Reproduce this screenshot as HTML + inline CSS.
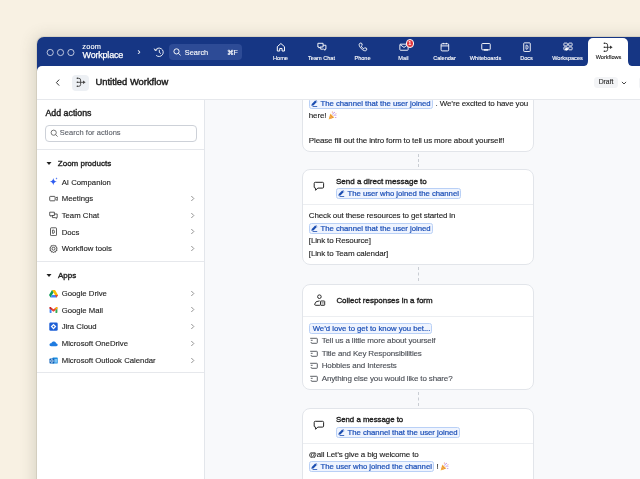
<!DOCTYPE html>
<html><head><meta charset="utf-8">
<style>
*{box-sizing:border-box;margin:0;padding:0}
html,body{width:640px;height:479px;overflow:hidden}
#root{position:absolute;left:0;top:0;width:640px;height:479px;will-change:transform}
.t{-webkit-text-stroke:.12px currentColor}
body{background:#F8F1E3;font-family:"Liberation Sans",sans-serif;position:relative;color:#222}
.abs{position:absolute}
#win{position:absolute;left:37px;top:36.5px;width:700px;height:500px;background:#163684;border-top-left-radius:7px;box-shadow:0 0 0 1px rgba(70,70,55,.1),-2px 0 16px rgba(70,75,60,.2)}
#panel{position:absolute;left:37px;top:66px;width:700px;height:500px;background:#fff;border-top-left-radius:5px}
.t{position:absolute;white-space:nowrap;line-height:1}
.navi{position:absolute;top:40px;width:41px;height:26px;text-align:center;color:#fff}
.navi .lb{position:absolute;left:-10px;right:-10px;top:14.5px;font-size:5.6px;text-align:center;-webkit-text-stroke:.12px #fff}
.navi svg{position:absolute;left:15.5px;top:1.8px}
#side{position:absolute;left:37px;top:100px;width:168px;height:400px;background:#fff;border-right:1px solid #E3E6EB}
#canvas{position:absolute;left:205px;top:100px;width:440px;height:400px;background:#F8F9FB;overflow:hidden}
.hr{position:absolute;height:1px;background:#E6E8EC}
.item{position:absolute;left:61.7px;font-size:7.75px;color:#1E1E1E}
.chev{position:absolute;left:190px}
.card{position:absolute;left:302px;width:232px;background:#fff;border:1px solid #E2E5EA;border-radius:8px}
.chip{position:absolute;height:11.2px;background:#EFF4FE;border:1px solid #B9D0F6;border-radius:2.5px;color:#1F52B8;line-height:9px;padding-left:10.5px;padding-right:1px;white-space:nowrap;font-size:7.75px;-webkit-text-stroke:.22px #1F52B8;letter-spacing:-.02px}
.chip svg{position:absolute;left:.8px;top:1.3px}
.dash{position:absolute;left:417.5px;width:1px;border-left:1px dashed #C9CDD3}
</style></head><body>
<div id="root">
<div id="win"></div>
<svg class="abs" style="left:44px;top:46px" width="34" height="12" viewBox="0 0 34 12">
<circle cx="6.2" cy="6.5" r="3.1" fill="none" stroke="#D9DEEC" stroke-width=".85"/>
<circle cx="16.5" cy="6.5" r="3.1" fill="none" stroke="#D9DEEC" stroke-width=".85"/>
<circle cx="26.9" cy="6.5" r="3.1" fill="none" stroke="#D9DEEC" stroke-width=".85"/>
</svg>
<div class="t" style="left:82.3px;top:42.6px;font-size:7.4px;color:#fff;letter-spacing:.15px;-webkit-text-stroke:.12px #fff">zoom</div>
<div class="t" style="left:82.5px;top:51.2px;font-size:9px;color:#fff;letter-spacing:-.2px;-webkit-text-stroke:.25px #fff">Workplace</div>
<div class="t" style="left:137.5px;top:48px;font-size:9px;color:#fff">›</div>
<svg class="abs" style="left:153px;top:46px" width="12" height="12" viewBox="0 0 12 12"><path d="M2.3 4.3A4.2 4.2 0 1 1 3.2 9.4" fill="none" stroke="#fff" stroke-width=".9"/><path d="M1.2 2.6L2.3 4.6 4.3 3.7" fill="none" stroke="#fff" stroke-width=".9"/><path d="M6.3 3.8V6.4L7.9 7.6" fill="none" stroke="#fff" stroke-width=".9"/></svg>
<div class="abs" style="left:169.2px;top:44px;width:73px;height:16px;background:#2D4B96;border-radius:4px"></div>
<svg class="abs" style="left:173.3px;top:48px" width="9" height="9" viewBox="0 0 9 9"><circle cx="3.5" cy="3.4" r="2.6" fill="none" stroke="#fff" stroke-width=".95"/><path d="M5.4 5.3L7.6 7.4" stroke="#fff" stroke-width=".95"/></svg>
<div class="t" style="left:184.8px;top:48.6px;font-size:7.4px;color:#fff;-webkit-text-stroke:.1px #fff">Search</div>
<div class="t" style="left:226.5px;top:48.6px;font-size:7px;color:#fff">⌘F</div>
<div class="navi" style="left:260.0px"><svg width="10" height="10" viewBox="0 0 9.2 9.2"><path d="M1.2 4.3L4.5 1.4 7.8 4.3V8.3H5.6V6H3.4V8.3H1.2Z" fill="none" stroke="#fff" stroke-width=".9" stroke-linejoin="round"/></svg><div class="lb">Home</div></div>
<div class="navi" style="left:301.0px"><svg width="10" height="10" viewBox="0 0 9.2 9.2"><path d="M.8 1.2H5.6V4.6H3L1.8 5.6V4.6H.8Z" fill="none" stroke="#fff" stroke-width=".85"/><path d="M5.6 3H8.2V6.6H7.4V7.6L6.2 6.6H3.4V4.6" fill="none" stroke="#fff" stroke-width=".85"/></svg><div class="lb">Team Chat</div></div>
<div class="navi" style="left:342.0px"><svg width="10" height="10" viewBox="0 0 9.2 9.2"><path d="M2 1L3.4 1.2 3.9 3 3 3.8C3.5 5 4.3 5.8 5.3 6.2L6.1 5.3 7.9 5.8 8 7.3C7.6 8 6.8 8.2 6 8 3.8 7.3 1.8 5.3 1.1 3 .9 2.2 1.2 1.4 2 1Z" fill="none" stroke="#fff" stroke-width=".85" stroke-linejoin="round"/></svg><div class="lb">Phone</div></div>
<div class="navi" style="left:383.0px"><svg width="10" height="10" viewBox="0 0 9.2 9.2"><rect x=".8" y="2" width="7.6" height="5.6" rx=".6" fill="none" stroke="#fff" stroke-width=".85"/><path d="M.9 2.3L4.6 5 8.3 2.3" fill="none" stroke="#fff" stroke-width=".85"/></svg><div class="lb">Mail</div></div>
<div class="navi" style="left:424.0px"><svg width="10" height="10" viewBox="0 0 9.2 9.2"><rect x="1" y="1.6" width="7" height="6.6" rx="1" fill="none" stroke="#fff" stroke-width=".85"/><path d="M1 3.6H8M3 .8V2M6 .8V2" stroke="#fff" stroke-width=".85"/></svg><div class="lb">Calendar</div></div>
<div class="navi" style="left:465.0px"><svg width="10" height="10" viewBox="0 0 9.2 9.2"><rect x=".7" y="1.4" width="7.8" height="5.8" rx=".7" fill="none" stroke="#fff" stroke-width=".85"/><path d="M2.6 7.3H6.6" stroke="#fff" stroke-width="1.3"/></svg><div class="lb">Whiteboards</div></div>
<div class="navi" style="left:506.0px"><svg width="10" height="10" viewBox="0 0 9.2 9.2"><rect x="1.6" y=".8" width="6" height="8" rx=".6" fill="none" stroke="#fff" stroke-width=".85"/><path d="M3.7 3H4.3Q5.6 3 5.6 4.8Q5.6 6.6 4.3 6.6H3.7Z" fill="none" stroke="#fff" stroke-width=".8"/></svg><div class="lb">Docs</div></div>
<div class="navi" style="left:547.0px"><svg width="10" height="10" viewBox="0 0 9.2 9.2"><rect x=".8" y="1" width="3.2" height="2.6" rx=".5" fill="none" stroke="#fff" stroke-width=".8"/><rect x="5.2" y="1" width="3.2" height="2.6" rx=".5" fill="none" stroke="#fff" stroke-width=".8"/><rect x=".8" y="4.6" width="3.2" height="2.6" rx=".5" fill="none" stroke="#fff" stroke-width=".8"/><rect x="5.2" y="4.6" width="3.2" height="2.6" rx=".5" fill="none" stroke="#fff" stroke-width=".8"/><circle cx="3.2" cy="6.6" r="1.3" fill="#fff"/></svg><div class="lb">Workspaces</div></div>
<div class="abs" style="left:405.6px;top:39.4px;width:8.2px;height:8.2px;border-radius:50%;background:#E0323A;border:.8px solid #fff;color:#fff;font-size:5.5px;line-height:6.6px;text-align:center;font-weight:700">1</div>
<div class="abs" style="left:588.4px;top:38.3px;width:40px;height:28px;background:#fff;border-radius:5px 5px 0 0"></div>
<svg class="abs" style="left:583.4px;top:61px" width="50" height="6" viewBox="0 0 50 6"><path d="M0 5.2Q5 5.2 5 0V5.2Z" fill="#fff"/><path d="M50 5.2Q45 5.2 45 0V5.2Z" fill="#fff"/></svg>
<svg class="abs" style="left:603.2px;top:41.8px" width="11" height="11" viewBox="0 0 11 11"><path d="M1 1.3H2.8Q4.6 1.3 4.6 3V7.6Q4.6 9.3 2.8 9.3H1M1 5.3H7.4" fill="none" stroke="#333" stroke-width=".9"/><path d="M7 3.6L9.6 5.3 7 7Z" fill="#333"/><circle cx="1.3" cy="1.3" r=".75" fill="#333"/><circle cx="1.3" cy="5.3" r=".75" fill="#333"/><circle cx="1.3" cy="9.3" r=".75" fill="#333"/></svg>
<div class="t" style="left:588px;width:41px;text-align:center;top:55.2px;font-size:5.6px;color:#222">Workflows</div>
<div id="panel"></div>
<svg class="abs" style="left:53px;top:77px" width="10" height="10" viewBox="0 0 10 10"><path d="M6.2 2.6L3.4 5.6l2.8 3" fill="none" stroke="#333" stroke-width="1"/></svg>
<div class="abs" style="left:72px;top:74.5px;width:17px;height:16.5px;background:#EDF0F4;border-radius:4px"></div>
<svg class="abs" style="left:75.5px;top:77.2px" width="11" height="11" viewBox="0 0 11 11"><path d="M1 1.3H2.8Q4.6 1.3 4.6 3V7.6Q4.6 9.3 2.8 9.3H1M1 5.3H7.4" fill="none" stroke="#444" stroke-width=".9"/><path d="M7 3.6L9.6 5.3 7 7Z" fill="#444"/><circle cx="1.3" cy="1.3" r=".75" fill="#444"/><circle cx="1.3" cy="5.3" r=".75" fill="#444"/><circle cx="1.3" cy="9.3" r=".75" fill="#444"/></svg>
<div class="t" style="left:95.5px;top:77.1px;font-size:9.4px;color:#1E1E1E;-webkit-text-stroke:.45px #1E1E1E">Untitled Workflow</div>
<div class="abs" style="left:594px;top:77.2px;width:24px;height:11px;background:#F3F4F6;border-radius:3.5px"></div>
<div class="t" style="left:598.7px;top:79.1px;font-size:6.8px;color:#2A2A2A">Draft</div>
<svg class="abs" style="left:621.2px;top:80.5px" width="6" height="4" viewBox="0 0 6 4"><path d="M.9 .9l2.1 2.1L5.1 .9" fill="none" stroke="#333" stroke-width=".9"/></svg>
<div class="abs" style="left:638.7px;top:76.7px;width:10px;height:12px;background:#F3F4F6;border-radius:3px"></div>
<div class="hr" style="left:37px;top:99px;width:610px"></div>
<div id="side"></div>
<div class="t" style="left:45.5px;top:109.2px;font-size:8.8px;color:#1E1E1E;-webkit-text-stroke:.4px #1E1E1E">Add actions</div>
<div class="abs" style="left:45px;top:125px;width:152px;height:16.5px;border:1px solid #CDD1D8;border-radius:4px"></div>
<svg class="abs" style="left:49.5px;top:129px" width="9" height="9" viewBox="0 0 9 9"><circle cx="3.7" cy="3.7" r="2.6" fill="none" stroke="#555" stroke-width=".8"/><path d="M5.6 5.6L7.6 7.6" stroke="#555" stroke-width=".8"/></svg>
<div class="t" style="left:59.8px;top:129.3px;font-size:7.5px;color:#5F636B;letter-spacing:.02px">Search for actions</div>
<div class="hr" style="left:37px;top:149px;width:167px"></div>
<svg class="abs" style="left:46px;top:160.5px" width="6" height="5" viewBox="0 0 6 5"><path d="M.5 1H5.5L3 4Z" fill="#222"/></svg>
<div class="t" style="left:57.8px;top:159.9px;font-size:8px;color:#222;-webkit-text-stroke:.36px #222">Zoom products</div>
<svg class="abs" style="left:48.8px;top:177.1px" width="9" height="9" viewBox="0 0 9 9"><path d="M4.3 .9C4.7 3.2 5.5 4.1 7.9 4.6 5.5 5.1 4.7 6 4.3 8.3 3.9 6 3.1 5.1.7 4.6 3.1 4.1 3.9 3.2 4.3.9Z" fill="#2D5BF0"/><path d="M7.5.3L7.8 1.2 8.7 1.5 7.8 1.8 7.5 2.7 7.2 1.8 6.3 1.5 7.2 1.2Z" fill="#2D5BF0"/></svg>
<div class="t item" style="top:178.5px">AI Companion</div>
<svg class="abs" style="left:48.8px;top:193.6px" width="9" height="9" viewBox="0 0 9 9"><rect x=".7" y="2.4" width="5.4" height="4.4" rx=".7" fill="none" stroke="#333" stroke-width=".8"/><path d="M6.8 3.8L8.3 3V6.4L6.8 5.6" fill="none" stroke="#333" stroke-width=".8"/></svg>
<div class="t item" style="top:195.0px">Meetings</div>
<svg class="chev" style="top:194.8px" width="5" height="7" viewBox="0 0 5 7"><path d="M1.3 1L3.8 3.5 1.3 6" fill="none" stroke="#777" stroke-width=".8"/></svg>
<svg class="abs" style="left:48.8px;top:210.6px" width="9" height="9" viewBox="0 0 9 9"><path d="M.7 1.2H5.4V4.5H2.8L1.7 5.4V4.5H.7Z" fill="none" stroke="#333" stroke-width=".8"/><path d="M5.4 3H8.2V6.6H7.4V7.6L6.3 6.6H3.4V4.5" fill="none" stroke="#333" stroke-width=".8"/></svg>
<div class="t item" style="top:212.0px">Team Chat</div>
<svg class="chev" style="top:211.8px" width="5" height="7" viewBox="0 0 5 7"><path d="M1.3 1L3.8 3.5 1.3 6" fill="none" stroke="#777" stroke-width=".8"/></svg>
<svg class="abs" style="left:48.8px;top:227.1px" width="9" height="9" viewBox="0 0 9 9"><rect x="1.5" y=".8" width="6" height="7.8" rx=".7" fill="none" stroke="#333" stroke-width=".8"/><path d="M3.6 3H4.2Q5.5 3 5.5 4.7Q5.5 6.4 4.2 6.4H3.6Z" fill="none" stroke="#333" stroke-width=".75"/></svg>
<div class="t item" style="top:228.5px">Docs</div>
<svg class="chev" style="top:228.3px" width="5" height="7" viewBox="0 0 5 7"><path d="M1.3 1L3.8 3.5 1.3 6" fill="none" stroke="#777" stroke-width=".8"/></svg>
<svg class="abs" style="left:48.8px;top:244.0px" width="9" height="9" viewBox="0 0 9 9"><path d="M4.5 .9L5.4 1.9 6.8 1.7 7 3.1 8.2 3.9 7.5 5 8.1 6.3 6.8 6.8 6.5 8.1 5.1 7.8 4.5 8.6 3.9 7.8 2.5 8.1 2.2 6.8.9 6.3 1.5 5 .8 3.9 2 3.1 2.2 1.7 3.6 1.9Z" fill="none" stroke="#333" stroke-width=".8" stroke-linejoin="round"/><circle cx="4.5" cy="4.7" r="1.5" fill="none" stroke="#333" stroke-width=".8"/></svg>
<div class="t item" style="top:245.4px">Workflow tools</div>
<svg class="chev" style="top:245.20000000000002px" width="5" height="7" viewBox="0 0 5 7"><path d="M1.3 1L3.8 3.5 1.3 6" fill="none" stroke="#777" stroke-width=".8"/></svg>
<div class="hr" style="left:37px;top:261px;width:167px"></div>
<svg class="abs" style="left:46px;top:272.5px" width="6" height="5" viewBox="0 0 6 5"><path d="M.5 1H5.5L3 4Z" fill="#222"/></svg>
<div class="t" style="left:58px;top:271.9px;font-size:8px;color:#222;-webkit-text-stroke:.36px #222">Apps</div>
<svg class="abs" style="left:48.8px;top:288.8px" width="9" height="9" viewBox="0 0 9 9"><path d="M3 .9H6L9 6.1 7.5 8.6Z" fill="#FBBC04"/><path d="M3 .9L0 6.1 1.5 8.6 4.5 3.5Z" fill="#0F9D58"/><path d="M1.5 8.6H7.5L9 6.1H3Z" fill="#4285F4"/><path d="M7.5 8.6L9 6.1H6Z" fill="#EA4335"/></svg>
<div class="t item" style="top:290.0px">Google Drive</div>
<svg class="chev" style="top:289.8px" width="5" height="7" viewBox="0 0 5 7"><path d="M1.3 1L3.8 3.5 1.3 6" fill="none" stroke="#777" stroke-width=".8"/></svg>
<svg class="abs" style="left:48.8px;top:305.40000000000003px" width="9" height="9" viewBox="0 0 9 9"><path d="M.6 2.6Q.6 1.5 1.6 2.1L4.5 4.3 7.4 2.1Q8.4 1.5 8.4 2.6V3.8L4.5 6.7.6 3.8Z" fill="#EA4335"/><path d="M.6 3.5L2.5 4.9V7.9H1.2Q.6 7.9.6 7.3Z" fill="#4285F4"/><path d="M8.4 3.5L6.5 4.9V7.9H7.8Q8.4 7.9 8.4 7.3Z" fill="#34A853"/><path d="M6.5 3.2L7.4 2.1Q8.4 1.5 8.4 2.6V3.5L6.5 4.9Z" fill="#FBBC04"/><path d="M2.5 3.2L1.6 2.1Q.6 1.5.6 2.6V3.5L2.5 4.9Z" fill="#C5221F"/></svg>
<div class="t item" style="top:306.6px">Google Mail</div>
<svg class="chev" style="top:306.40000000000003px" width="5" height="7" viewBox="0 0 5 7"><path d="M1.3 1L3.8 3.5 1.3 6" fill="none" stroke="#777" stroke-width=".8"/></svg>
<svg class="abs" style="left:48.8px;top:322.2px" width="9" height="9" viewBox="0 0 9 9"><rect x=".3" y=".4" width="8.4" height="8.4" rx="1.3" fill="#1D5FD6"/><path d="M4.5 1.8L7.3 4.6 4.5 7.4 1.7 4.6Z" fill="#fff"/><path d="M4.5 3.5L5.6 4.6 4.5 5.7 3.4 4.6Z" fill="#1D5FD6"/></svg>
<div class="t item" style="top:323.4px">Jira Cloud</div>
<svg class="chev" style="top:323.2px" width="5" height="7" viewBox="0 0 5 7"><path d="M1.3 1L3.8 3.5 1.3 6" fill="none" stroke="#777" stroke-width=".8"/></svg>
<svg class="abs" style="left:48.8px;top:338.8px" width="9" height="9" viewBox="0 0 9 9"><path d="M2.2 7.2C.9 7.2.4 6.3.5 5.5.7 4.6 1.5 4.2 2.3 4.3 2.8 2.9 4 2.3 5.2 2.5 6.3 2.7 7 3.6 7.2 4.5 8.1 4.5 8.8 5.2 8.7 6.1 8.6 6.8 8 7.2 7.3 7.2Z" fill="#1F7BE0"/></svg>
<div class="t item" style="top:340.0px">Microsoft OneDrive</div>
<svg class="chev" style="top:339.8px" width="5" height="7" viewBox="0 0 5 7"><path d="M1.3 1L3.8 3.5 1.3 6" fill="none" stroke="#777" stroke-width=".8"/></svg>
<svg class="abs" style="left:48.8px;top:355.6px" width="9" height="9" viewBox="0 0 9 9"><rect x="3.5" y="1.6" width="5.2" height="6" rx=".6" fill="#1A8CE0"/><rect x="4.2" y="3" width="3.8" height="3.6" fill="#7DC4F5"/><rect x=".5" y="2.6" width="4.8" height="4.8" rx=".6" fill="#0A5EB8"/><ellipse cx="2.9" cy="5" rx="1.2" ry="1.4" fill="none" stroke="#fff" stroke-width=".7"/></svg>
<div class="t item" style="top:356.8px">Microsoft Outlook Calendar</div>
<svg class="chev" style="top:356.6px" width="5" height="7" viewBox="0 0 5 7"><path d="M1.3 1L3.8 3.5 1.3 6" fill="none" stroke="#777" stroke-width=".8"/></svg>
<div class="hr" style="left:37px;top:372px;width:167px"></div>
<div id="canvas"><div style="position:absolute;left:-205px;top:-100px;width:640px;height:479px">
<div class="card" style="top:60px;height:91.5px"></div>
<div class="chip" style="left:309px;top:97.80px"><svg width="8" height="8" viewBox="0 0 8 8"><path d="M.3 5.7L.8 3.9 4.2.5 5.8 2.1 2.4 5.5Z" fill="#1B4DB1"/><path d="M4.7 0L6.3 1.6" stroke="#1B4DB1" stroke-width=".6"/><path d="M1.6 6.5H6.2" stroke="#1B4DB1" stroke-width=".8"/></svg>The channel that the user joined</div>
<div class="t" style="left:435.5px;top:99.93px;font-size:8.0px;font-weight:400;color:#1E1E1E;letter-spacing:-0.14px;">. We’re excited to have you</div>

<div class="t" style="left:308.8px;top:111.63px;font-size:8.0px;font-weight:400;color:#1E1E1E;letter-spacing:-0.14px;">here!</div>

<svg class="abs" style="left:327.6px;top:110.5px" width="9" height="9" viewBox="0 0 9 9"><path d="M.6 8.4L2.4 2.6 6.4 6.6Z" fill="#F4B63F"/><path d="M1.4 5.8L3.2 7.6M2 3.9L5.1 7" stroke="#E2604A" stroke-width=".6"/><path d="M4.6 3.6Q5 1.6 7 1.2M5.6 4.4Q7 3.6 8.4 4.2" fill="none" stroke="#9C5BD6" stroke-width=".6"/><circle cx="4.3" cy="1" r=".5" fill="#E2604A"/><circle cx="7.8" cy="6.6" r=".5" fill="#9C5BD6"/><circle cx="8" cy="2.4" r=".45" fill="#E2604A"/></svg>
<div class="t" style="left:308.8px;top:136.93px;font-size:8.0px;font-weight:400;color:#1E1E1E;letter-spacing:-0.14px;">Please fill out the intro form to tell us more about yourself!</div>

<div class="dash" style="top:153.5px;height:13.5px"></div>
<div class="card" style="top:169px;height:95.5px"></div>
<svg class="abs" style="left:313.3px;top:181.3px" width="12" height="11" viewBox="0 0 12 11"><path d="M2.3 1.3H9.5Q10.6 1.3 10.6 2.4V6Q10.6 7.1 9.5 7.1H4.8L2.6 9.3V7.1H2.3Q1.2 7.1 1.2 6V2.4Q1.2 1.3 2.3 1.3Z" fill="none" stroke="#222" stroke-width="1" stroke-linejoin="round"/></svg>
<div class="t" style="left:336px;top:177.68px;font-size:8px;font-weight:400;color:#222;letter-spacing:0px;-webkit-text-stroke:.36px #222">Send a direct message to</div>

<div class="chip" style="left:336px;top:187.80px"><svg width="8" height="8" viewBox="0 0 8 8"><path d="M.3 5.7L.8 3.9 4.2.5 5.8 2.1 2.4 5.5Z" fill="#1B4DB1"/><path d="M4.7 0L6.3 1.6" stroke="#1B4DB1" stroke-width=".6"/><path d="M1.6 6.5H6.2" stroke="#1B4DB1" stroke-width=".8"/></svg>The user who joined the channel</div>
<div class="hr" style="left:303px;top:204px;width:230px;background:#ECEEF1"></div>
<div class="t" style="left:308.8px;top:212.43px;font-size:8.0px;font-weight:400;color:#1E1E1E;letter-spacing:-0.14px;">Check out these resources to get started in</div>

<div class="chip" style="left:309px;top:222.50px"><svg width="8" height="8" viewBox="0 0 8 8"><path d="M.3 5.7L.8 3.9 4.2.5 5.8 2.1 2.4 5.5Z" fill="#1B4DB1"/><path d="M4.7 0L6.3 1.6" stroke="#1B4DB1" stroke-width=".6"/><path d="M1.6 6.5H6.2" stroke="#1B4DB1" stroke-width=".8"/></svg>The channel that the user joined</div>
<div class="t" style="left:308.8px;top:236.93px;font-size:8.0px;font-weight:400;color:#1E1E1E;letter-spacing:-0.14px;">[Link to Resource]</div>

<div class="t" style="left:308.8px;top:250.18px;font-size:8.0px;font-weight:400;color:#1E1E1E;letter-spacing:-0.14px;">[Link to Team calendar]</div>

<div class="dash" style="top:267.3px;height:13.7px"></div>
<div class="card" style="top:284px;height:106px"></div>
<svg class="abs" style="left:312.5px;top:293.5px" width="13" height="13" viewBox="0 0 13 13"><circle cx="6.4" cy="2.7" r="1.8" fill="none" stroke="#222" stroke-width=".95"/><path d="M6.9 11.3H2.7Q1.5 11.3 1.7 10.1Q2.2 6.9 6.6 6.9" fill="none" stroke="#222" stroke-width=".95"/><rect x="7.5" y="7" width="4.2" height="4.3" rx=".5" fill="none" stroke="#222" stroke-width=".95"/><path d="M8.5 8.6H10.7M8.5 9.9H10.7" stroke="#555" stroke-width=".6"/></svg>
<div class="t" style="left:336.4px;top:297.17px;font-size:7.95px;font-weight:400;color:#222;letter-spacing:0px;-webkit-text-stroke:.36px #222">Collect responses in a form</div>

<div class="hr" style="left:303px;top:315.5px;width:230px;background:#ECEEF1"></div>
<div class="chip" style="left:309.2px;top:322.60px;padding-left:2.5px">We’d love to get to know you bet...</div>
<svg class="abs" style="left:310.3px;top:337.1px" width="9" height="8" viewBox="0 0 9 8"><path d="M.2 1.3H6.6Q7.3 1.3 7.3 2V5.6Q7.3 6.3 6.6 6.3H1.9Q1.2 6.3 1.2 5.6V5M.8 3.3H2.6" fill="none" stroke="#4B4F56" stroke-width=".9"/></svg>
<div class="t" style="left:321.7px;top:337.23px;font-size:8.0px;font-weight:400;color:#4B4F56;letter-spacing:-0.14px;">Tell us a little more about yourself</div>

<svg class="abs" style="left:310.3px;top:349.8px" width="9" height="8" viewBox="0 0 9 8"><path d="M.2 1.3H6.6Q7.3 1.3 7.3 2V5.6Q7.3 6.3 6.6 6.3H1.9Q1.2 6.3 1.2 5.6V5M.8 3.3H2.6" fill="none" stroke="#4B4F56" stroke-width=".9"/></svg>
<div class="t" style="left:321.7px;top:349.93px;font-size:8.0px;font-weight:400;color:#4B4F56;letter-spacing:-0.14px;">Title and Key Responsibilities</div>

<svg class="abs" style="left:310.3px;top:362.0px" width="9" height="8" viewBox="0 0 9 8"><path d="M.2 1.3H6.6Q7.3 1.3 7.3 2V5.6Q7.3 6.3 6.6 6.3H1.9Q1.2 6.3 1.2 5.6V5M.8 3.3H2.6" fill="none" stroke="#4B4F56" stroke-width=".9"/></svg>
<div class="t" style="left:321.7px;top:362.13px;font-size:8.0px;font-weight:400;color:#4B4F56;letter-spacing:-0.14px;">Hobbies and Interests</div>

<svg class="abs" style="left:310.3px;top:374.6px" width="9" height="8" viewBox="0 0 9 8"><path d="M.2 1.3H6.6Q7.3 1.3 7.3 2V5.6Q7.3 6.3 6.6 6.3H1.9Q1.2 6.3 1.2 5.6V5M.8 3.3H2.6" fill="none" stroke="#4B4F56" stroke-width=".9"/></svg>
<div class="t" style="left:321.7px;top:374.73px;font-size:8.0px;font-weight:400;color:#4B4F56;letter-spacing:-0.14px;">Anything else you would like to share?</div>

<div class="dash" style="top:392px;height:13.5px"></div>
<div class="card" style="top:408px;height:100px"></div>
<svg class="abs" style="left:313.3px;top:419.5px" width="12" height="11" viewBox="0 0 12 11"><path d="M2.3 1.3H9.5Q10.6 1.3 10.6 2.4V6Q10.6 7.1 9.5 7.1H4.8L2.6 9.3V7.1H2.3Q1.2 7.1 1.2 6V2.4Q1.2 1.3 2.3 1.3Z" fill="none" stroke="#222" stroke-width="1" stroke-linejoin="round"/></svg>
<div class="t" style="left:336px;top:416.10px;font-size:7.8px;font-weight:400;color:#222;letter-spacing:0px;-webkit-text-stroke:.36px #222">Send a message to</div>

<div class="chip" style="left:336px;top:426.60px"><svg width="8" height="8" viewBox="0 0 8 8"><path d="M.3 5.7L.8 3.9 4.2.5 5.8 2.1 2.4 5.5Z" fill="#1B4DB1"/><path d="M4.7 0L6.3 1.6" stroke="#1B4DB1" stroke-width=".6"/><path d="M1.6 6.5H6.2" stroke="#1B4DB1" stroke-width=".8"/></svg>The channel that the user joined</div>
<div class="hr" style="left:303px;top:443px;width:230px;background:#ECEEF1"></div>
<div class="t" style="left:308.8px;top:451.43px;font-size:8.0px;font-weight:400;color:#1E1E1E;letter-spacing:-0.14px;">@all Let’s give a big welcome to</div>

<div class="chip" style="left:309px;top:460.60px"><svg width="8" height="8" viewBox="0 0 8 8"><path d="M.3 5.7L.8 3.9 4.2.5 5.8 2.1 2.4 5.5Z" fill="#1B4DB1"/><path d="M4.7 0L6.3 1.6" stroke="#1B4DB1" stroke-width=".6"/><path d="M1.6 6.5H6.2" stroke="#1B4DB1" stroke-width=".8"/></svg>The user who joined the channel</div>
<div class="t" style="left:436.5px;top:463.43px;font-size:8.0px;font-weight:400;color:#1E1E1E;letter-spacing:-0.14px;">!</div>

<svg class="abs" style="left:439.7px;top:462px" width="9" height="9" viewBox="0 0 9 9"><path d="M.6 8.4L2.4 2.6 6.4 6.6Z" fill="#F4B63F"/><path d="M1.4 5.8L3.2 7.6M2 3.9L5.1 7" stroke="#E2604A" stroke-width=".6"/><path d="M4.6 3.6Q5 1.6 7 1.2M5.6 4.4Q7 3.6 8.4 4.2" fill="none" stroke="#9C5BD6" stroke-width=".6"/><circle cx="4.3" cy="1" r=".5" fill="#E2604A"/><circle cx="7.8" cy="6.6" r=".5" fill="#9C5BD6"/><circle cx="8" cy="2.4" r=".45" fill="#E2604A"/></svg>
</div></div>
</div></body></html>
